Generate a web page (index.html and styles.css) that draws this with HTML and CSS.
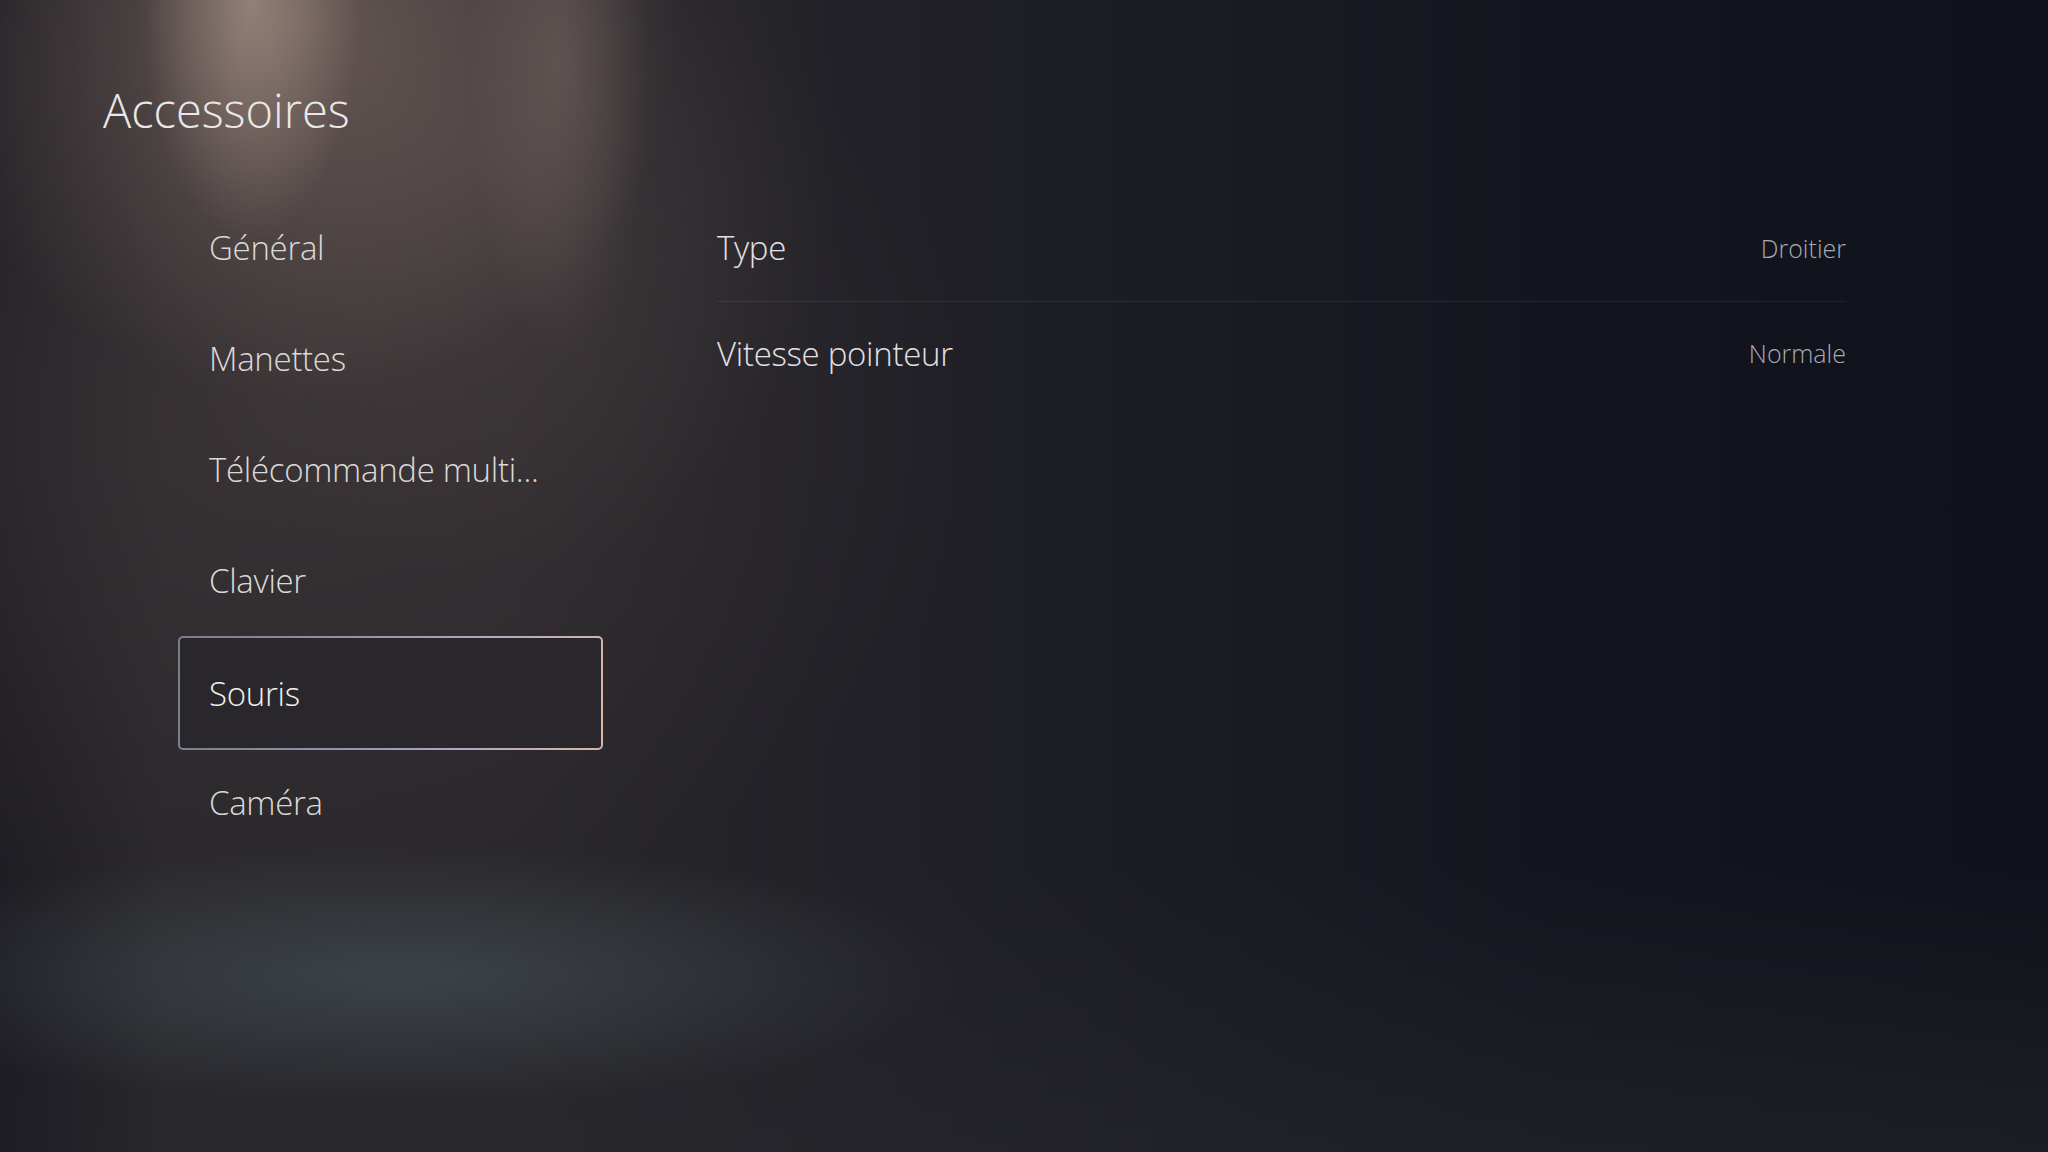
FILE: index.html
```html
<!DOCTYPE html>
<html lang="fr">
<head>
<meta charset="utf-8">
<title>Accessoires</title>
<link rel="stylesheet" href="styles.css">
</head>
<body>
<div class="screen">
  <h1 class="title">Accessoires</h1>
  <div class="content">
    <nav class="menu">
      <div class="menu-item">Général</div>
      <div class="menu-item">Manettes</div>
      <div class="menu-item">Télécommande multi...</div>
      <div class="menu-item">Clavier</div>
      <div class="menu-item selected">Souris</div>
      <div class="menu-item">Caméra</div>
    </nav>
    <section class="panel">
      <div class="row">
        <span class="label">Type</span>
        <span class="value">Droitier</span>
      </div>
      <div class="row">
        <span class="label">Vitesse pointeur</span>
        <span class="value">Normale</span>
      </div>
    </section>
  </div>
</div>
</body>
</html>
```

FILE: styles.css
```css
html, body {
  margin: 0;
  padding: 0;
}

body {
  width: 2048px;
  height: 1152px;
  overflow: hidden;
  font-family: "Open Sans", "Noto Sans", sans-serif;
  font-weight: 300;
  color: #e4e0e0;
  background:
    radial-gradient(ellipse 110px 240px at 250px 0px, rgba(200, 175, 160, 0.5), rgba(200, 175, 160, 0) 100%),
    radial-gradient(ellipse 90px 300px at 560px 60px, rgba(140, 120, 114, 0.35), rgba(140, 120, 114, 0) 100%),
    radial-gradient(ellipse 380px 380px at 300px 20px, rgba(140, 118, 110, 0.55), rgba(140, 118, 110, 0) 100%),
    radial-gradient(ellipse 360px 420px at 480px 160px, rgba(100, 86, 84, 0.35), rgba(100, 86, 84, 0) 100%),
    radial-gradient(ellipse 560px 130px at 400px 975px, rgba(78, 94, 98, 0.5), rgba(78, 94, 98, 0) 100%),
    radial-gradient(ellipse 700px 520px at 280px 420px, rgba(72, 62, 62, 0.5), rgba(72, 62, 62, 0) 100%),
    linear-gradient(90deg, rgba(18, 18, 26, 0.5) 0%, rgba(18, 18, 26, 0) 8%),
    linear-gradient(180deg, rgba(0, 0, 0, 0) 75%, rgba(40, 40, 46, 0.5) 100%),
    linear-gradient(90deg, #2a272b 0%, #29272b 25%, #1e1e25 50%, #14161f 75%, #10121b 100%);
}

.screen {
  display: flex;
  flex-direction: column;
  height: 1152px;
  box-sizing: border-box;
  padding: 79px 0 0 103px;
}

.title {
  margin: 0;
  font-size: 47px;
  font-weight: 300;
  line-height: 62px;
  color: #ebe7e7;
  letter-spacing: 0;
}

.content {
  display: flex;
  margin-top: 51px;
  padding-left: 75px;
}

.menu {
  display: flex;
  flex-direction: column;
  width: 425px;
}

.menu-item {
  height: 111px;
  box-sizing: border-box;
  display: flex;
  align-items: center;
  padding-left: 31px;
  font-size: 33px;
  color: #dcd8d8;
  letter-spacing: -0.3px;
  border-radius: 5px;
}

.menu-item.selected {
  height: 114px;
  margin: 0 0 -3px;
  color: #f2f0f0;
  padding-left: 29px;
  border: 2px solid transparent;
  background:
    linear-gradient(#29272c, #29272c) padding-box,
    linear-gradient(100deg, #7a7d8c 0%, #9294a8 40%, #b2a8c4 70%, #d8b6a4 100%) border-box;
}

.panel {
  display: flex;
  flex-direction: column;
  margin-left: 114px;
  width: 1129px;
  margin-top: 2px;
}

.row {
  display: flex;
  align-items: center;
  justify-content: space-between;
  height: 107px;
}

.row + .row {
  height: 102px;
  border-top: 1px solid rgba(255, 255, 255, 0.07);
}

.label {
  font-size: 33px;
  color: #e2e0e6;
  letter-spacing: -0.3px;
}

.value {
  font-size: 25px;
  color: #a9a9b2;
}
```
